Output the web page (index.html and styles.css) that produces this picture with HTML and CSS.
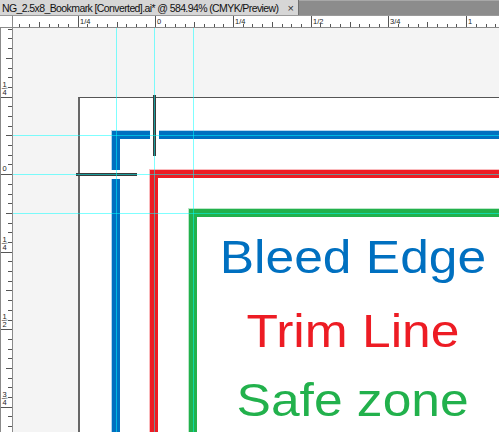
FILE: index.html
```html
<!DOCTYPE html>
<html lang="en">
<head>
    <meta charset="UTF-8">
    <title>NG_2.5x8_Bookmark</title>
    <link rel="stylesheet" href="styles.css">
</head>
<body>
    <div class="app">
        <!-- Document tab -->
        <div class="tabs">
            <div class="tab">
                <span class="tab-title">NG_2.5x8_Bookmark [Converted].ai* @ 584.94% (CMYK/Preview)</span>
                <span class="tab-close">×</span>
            </div>
            <div class="tab-fill"></div>
        </div>

        <div class="work">
            <div class="corner"></div>

            <!-- Top ruler, drawn in page coordinates -->
            <div class="ruler ruler-h">
                <svg width="486" height="11" viewBox="13 16 486 11">
                    <path class="tick" d="M19.5 24v3M29.5 24v3M49.5 24v3M58.5 24v3M68.5 24v3M87.5 24v3M97.5 24v3M107.5 24v3M126.5 24v3M136.5 24v3M146.5 24v3M165.5 24v3M175.5 24v3M185.5 24v3M204.5 24v3M214.5 24v3M223.5 24v3M243.5 24v3M252.5 24v3M262.5 24v3M282.5 24v3M291.5 24v3M301.5 24v3M320.5 24v3M330.5 24v3M340.5 24v3M359.5 24v3M369.5 24v3M379.5 24v3M398.5 24v3M408.5 24v3M418.5 24v3M437.5 24v3M447.5 24v3M456.5 24v3M476.5 24v3M486.5 24v3M495.5 24v3"/>
                    <path class="tick" d="M39.5 22v5M117.5 22v5M194.5 22v5M272.5 22v5M350.5 22v5M427.5 22v5"/>
                    <path class="tick" d="M78.5 16v11M155.5 16v11M233.5 16v11M311.5 16v11M388.5 16v11M466.5 16v11"/>
                    <text x="80" y="23.5">1/4</text>
                    <text x="157" y="23.5">0</text>
                    <text x="235" y="23.5">1/4</text>
                    <text x="313" y="23.5">1/2</text>
                    <text x="390" y="23.5">3/4</text>
                    <text x="468" y="23.5">1</text>
                </svg>
            </div>

            <!-- Side ruler -->
            <div class="ruler ruler-v">
                <svg width="11" height="404" viewBox="1 28 11 404">
                    <path class="tick" d="M8 29.5h4M8 38.5h4M8 48.5h4M8 68.5h4M8 77.5h4M8 87.5h4M8 106.5h4M8 116.5h4M8 126.5h4M8 145.5h4M8 155.5h4M8 164.5h4M8 184.5h4M8 194.5h4M8 203.5h4M8 223.5h4M8 232.5h4M8 242.5h4M8 261.5h4M8 271.5h4M8 281.5h4M8 300.5h4M8 310.5h4M8 320.5h4M8 339.5h4M8 349.5h4M8 358.5h4M8 378.5h4M8 387.5h4M8 397.5h4M8 416.5h4M8 426.5h4"/>
                    <path class="tick" d="M6 58.5h6M6 135.5h6M6 213.5h6M6 290.5h6M6 368.5h6"/>
                    <path class="tick" d="M1 97.5h11M1 174.5h11M1 252.5h11M1 329.5h11M1 407.5h11"/>
                    <text class="vnum" x="4.5" y="86.5">1</text>
                    <text class="vnum" transform="translate(4.5 88.5) rotate(70)" y="2.5">/</text>
                    <text class="vnum" x="4.5" y="94.5">4</text>
                    <text class="vnum" x="4.5" y="170.5">0</text>
                    <text class="vnum" x="4.5" y="241.5">1</text>
                    <text class="vnum" transform="translate(4.5 243.5) rotate(70)" y="2.5">/</text>
                    <text class="vnum" x="4.5" y="249.5">4</text>
                    <text class="vnum" x="4.5" y="318.5">1</text>
                    <text class="vnum" transform="translate(4.5 320.5) rotate(70)" y="2.5">/</text>
                    <text class="vnum" x="4.5" y="326.5">2</text>
                    <text class="vnum" x="4.5" y="396.5">3</text>
                    <text class="vnum" transform="translate(4.5 398.5) rotate(70)" y="2.5">/</text>
                    <text class="vnum" x="4.5" y="404.5">4</text>
                </svg>
            </div>

            <!-- Pasteboard with the artboard -->
            <div class="canvas">
                <div class="artboard">
                    <div class="bleed">
                        <div class="trim">
                            <div class="safe">
                                <p class="label label-bleed"><span>Bleed Edge</span></p>
                                <p class="label label-trim"><span>Trim Line</span></p>
                                <p class="label label-safe"><span>Safe zone</span></p>
                            </div>
                        </div>
                    </div>
                </div>

                <div class="crop crop-h"></div>
                <div class="crop crop-v"></div>

                <div class="guide guide-v guide-x1"></div>
                <div class="guide guide-v guide-x2"></div>
                <div class="guide guide-v guide-x3"></div>
                <div class="guide guide-h guide-y1"></div>
                <div class="guide guide-h guide-y2"></div>
                <div class="guide guide-h guide-y3"></div>
            </div>
        </div>
    </div>
</body>
</html>
```

FILE: styles.css
```css
/* General page */
body {
    margin: 0;
    width: 499px;
    height: 432px;
    overflow: hidden;
    background-color: #f4f4f4;
    font-family: "Liberation Sans", Arial, sans-serif;
}

.app {
    display: flex;
    flex-direction: column;
    height: 100%;
}

/* Document tab strip */
.tabs {
    display: flex;
    height: 15px;
    flex: none;
    background-color: #8c8c8c;
}

.tab {
    width: 299px;
    flex: none;
    box-sizing: border-box;
    display: flex;
    align-items: center;
    padding-left: 2px;
    background-color: #d6d6d6;
    border-right: 1px solid #6f6f6f;
    color: #111;
    font-size: 10.5px;
    letter-spacing: -0.6px;
    white-space: nowrap;
}

.tab-close {
    margin-left: auto;
    margin-right: 4px;
    font-size: 11px;
    letter-spacing: 0;
    color: #333;
}

.tab-fill {
    flex: 1;
    border-top: 1px solid #a8a8a8;
}

/* Rulers + canvas */
.work {
    flex: 1;
    min-height: 0;
    display: grid;
    grid-template-columns: 13px 1fr;
    grid-template-rows: 13px 1fr;
}

.corner {
    box-sizing: border-box;
    background-color: #fff;
    border-top: 1px solid #9a9a9a;
    border-right: 1px solid #8a8a8a;
    border-bottom: 1px solid #8a8a8a;
}

.ruler {
    box-sizing: border-box;
    background-color: #fff;
    overflow: hidden;
}

.ruler svg {
    display: block;
}

.ruler-h {
    border-top: 1px solid #9a9a9a;
    border-bottom: 1px solid #8a8a8a;
}

.ruler-v {
    border-left: 1px solid #8a8a8a;
    border-right: 1px solid #8a8a8a;
}

.tick {
    stroke: #555;
    stroke-width: 1;
    fill: none;
}

.ruler text {
    font-family: "Liberation Sans", Arial, sans-serif;
    font-size: 7.5px;
    fill: #222;
}

.ruler .vnum {
    text-anchor: middle;
}

.canvas {
    position: relative;
    overflow: hidden;
    background-color: #f4f4f4;
}

/* Artboard and the three print boxes */
.artboard {
    width: 460px;
    height: 420px;
    margin: 69px 0 0 65px;
    background-color: #fff;
    border-top: 1px solid #555;
    border-left: 2px solid #666;
}

.bleed {
    margin: 33px 0 0 32px;
    border-top: 8px solid #0070c0;
    border-left: 8px solid #0070c0;
    box-shadow: -1px -1px 0 rgba(0, 112, 192, 0.3), inset 1px 1px 0 rgba(255, 255, 255, 0.3);
}

.trim {
    margin: 31px 0 0 30px;
    border-top: 8px solid #ed1c24;
    border-left: 8px solid #ed1c24;
    box-shadow: -1px -1px 0 rgba(237, 28, 36, 0.3);
}

.safe {
    width: 311px;
    height: 300px;
    margin: 31px 0 0 31px;
    padding-top: 3px;
    border-top: 8px solid #22b14c;
    border-left: 8px solid #22b14c;
    box-shadow: -1px -1px 0 rgba(34, 177, 76, 0.3);
}

.label {
    margin: 0;
    font-size: 46px;
    line-height: 74px;
    text-align: center;
    white-space: nowrap;
}

.label span {
    display: inline-block;
    transform: scaleX(1.12);
}

.label-bleed {
    color: #0070c0;
}

.label-trim {
    color: #ed1c24;
}

.label-safe {
    margin-top: -5px;
    color: #22b14c;
}

/* Crop marks, with a white knock-out where they cross the bleed line */
.crop {
    position: absolute;
}

.crop-h {
    left: 63px;
    top: 142px;
    width: 61px;
    height: 9px;
    background:
        linear-gradient(#3b3b3b, #3b3b3b) 0 3px / 100% 3px no-repeat,
        linear-gradient(#fff, #fff) 34px 0 / 12px 100% no-repeat;
}

.crop-v {
    left: 137px;
    top: 67px;
    width: 9px;
    height: 61px;
    background:
        linear-gradient(#3b3b3b, #3b3b3b) 3px 0 / 3px 100% no-repeat,
        linear-gradient(#fff, #fff) 0 34px / 100% 12px no-repeat;
}

/* Guides */
.guide {
    position: absolute;
    background-color: rgba(0, 255, 255, 0.5);
}

.guide-v {
    top: 0;
    bottom: 0;
    width: 1px;
}

.guide-h {
    left: 0;
    right: 0;
    height: 1px;
}

.guide-x1 { left: 103px; }
.guide-x2 { left: 141px; }
.guide-x3 { left: 180px; }
.guide-y1 { top: 107px; }
.guide-y2 { top: 146px; }
.guide-y3 { top: 185px; }
```
